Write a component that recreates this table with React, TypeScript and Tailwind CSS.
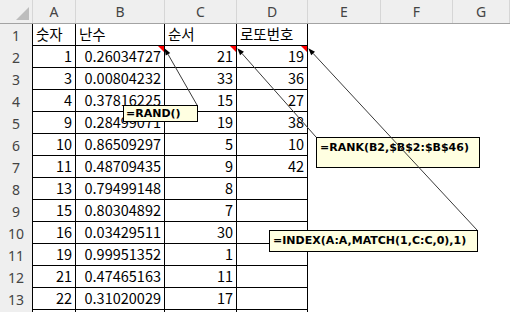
import React from "react";

const GRID = "grid grid-cols-[33px_43px_89px_72px_71px_73px_72px_1fr]";

const rows: [string, string, string, string][] = [
  ["숫자", "난수", "순서", "로또번호"],
  ["1", "0.26034727", "21", "19"],
  ["3", "0.00804232", "33", "36"],
  ["4", "0.37816225", "15", "27"],
  ["9", "0.28499071", "19", "38"],
  ["10", "0.86509297", "5", "10"],
  ["11", "0.48709435", "9", "42"],
  ["13", "0.79499148", "8", ""],
  ["15", "0.80304892", "7", ""],
  ["16", "0.03429511", "30", ""],
  ["19", "0.99951352", "1", ""],
  ["21", "0.47465163", "11", ""],
  ["22", "0.31020029", "17", ""],
  ["", "", "", ""],
];

function Arrow({ x1, y1, x2, y2 }: { x1: number; y1: number; x2: number; y2: number }) {
  const dx = x1 - x2;
  const dy = y1 - y2;
  const len = Math.sqrt(dx * dx + dy * dy);
  const ux = dx / len;
  const uy = dy / len;
  const bx = x1 - ux * 6;
  const by = y1 - uy * 6;
  const px = -uy * 2.6;
  const py = ux * 2.6;
  return (
    <g>
      <line x1={bx} y1={by} x2={x2} y2={y2} stroke="#3a3a3a" strokeWidth="1" />
      <polygon points={`${x1 + ux},${y1 + uy} ${bx + px},${by + py} ${bx - px},${by - py}`} fill="#000" />
    </g>
  );
}

export default function App() {
  const headers = ["A", "B", "C", "D", "E", "F", "G"];
  return (
    <div className="relative w-[510px] h-[312px] overflow-hidden bg-white">
      <div className={`${GRID} h-[24px] bg-[#efefef] border-b border-[#a3a3a3] text-[#444] text-[14px] font-['Noto_Sans',sans-serif]`}>
        <div className="relative border-r border-[#d6d6d6]">
          <svg className="absolute left-0 top-0" width="33" height="24">
            <polygon points="29,7 29,20 16,20" fill="#bdbdbd" />
          </svg>
        </div>
        {headers.map((h) => (
          <div key={h} className="flex items-center justify-center border-r border-[#d6d6d6]">
            {h}
          </div>
        ))}
      </div>
      {rows.map((r, i) => (
        <div key={i} className={`${GRID} h-[22px] text-[14.5px] text-black font-['Noto_Sans_CJK_KR',sans-serif]`}>
          <div className="flex items-center justify-center bg-[#efefef] border-r border-black text-[#444] text-[14px] font-['Noto_Sans',sans-serif]">
            {i < 13 ? i + 1 : ""}
          </div>
          {r.map((v, j) => {
            const isText = i === 0;
            return (
              <div
                key={j}
                className={`flex items-center border-r border-b border-black overflow-hidden whitespace-nowrap leading-none ${
                  isText ? "justify-start pl-[3px]" : "justify-end pr-[3px]"
                }`}
              >
                {v}
              </div>
            );
          })}
          <div />
          <div />
          <div />
        </div>
      ))}

      {/* comment boxes */}
      <div className="absolute left-[123px] top-[105px] w-[75px] h-[17px] bg-[#ffffe1] border border-black pl-[2px] text-[11px] font-bold leading-[15px] text-black font-['DejaVu_Sans',sans-serif] whitespace-nowrap">
        =RAND()
      </div>
      <div className="absolute left-[316px] top-[137px] w-[164px] h-[31px] bg-[#ffffe1] border border-black pl-[3px] pt-[2px] text-[11px] font-bold leading-[15px] text-black font-['DejaVu_Sans',sans-serif] whitespace-nowrap">
        =RANK(B2,$B$2:$B$46)
      </div>
      <div className="absolute left-[269px] top-[230px] w-[209px] h-[22px] bg-[#ffffe1] border border-black pl-[3px] pt-[2px] text-[11px] font-bold leading-[15px] text-black font-['DejaVu_Sans',sans-serif] whitespace-nowrap">
        =INDEX(A:A,MATCH(1,C:C,0),1)
      </div>

      {/* indicators and arrows */}
      <svg className="absolute left-0 top-0 pointer-events-none" width="510" height="312">
        <polygon points="158,46 164,46 164,52" fill="#ff0000" />
        <polygon points="230,46 236,46 236,52" fill="#ff0000" />
        <polygon points="301,46 307,46 307,52" fill="#ff0000" />
        <Arrow x1={165} y1={49} x2={197} y2={105} />
        <Arrow x1={238} y1={49} x2={316} y2={137} />
        <Arrow x1={309} y1={49} x2={477} y2={230} />
      </svg>
    </div>
  );
}
